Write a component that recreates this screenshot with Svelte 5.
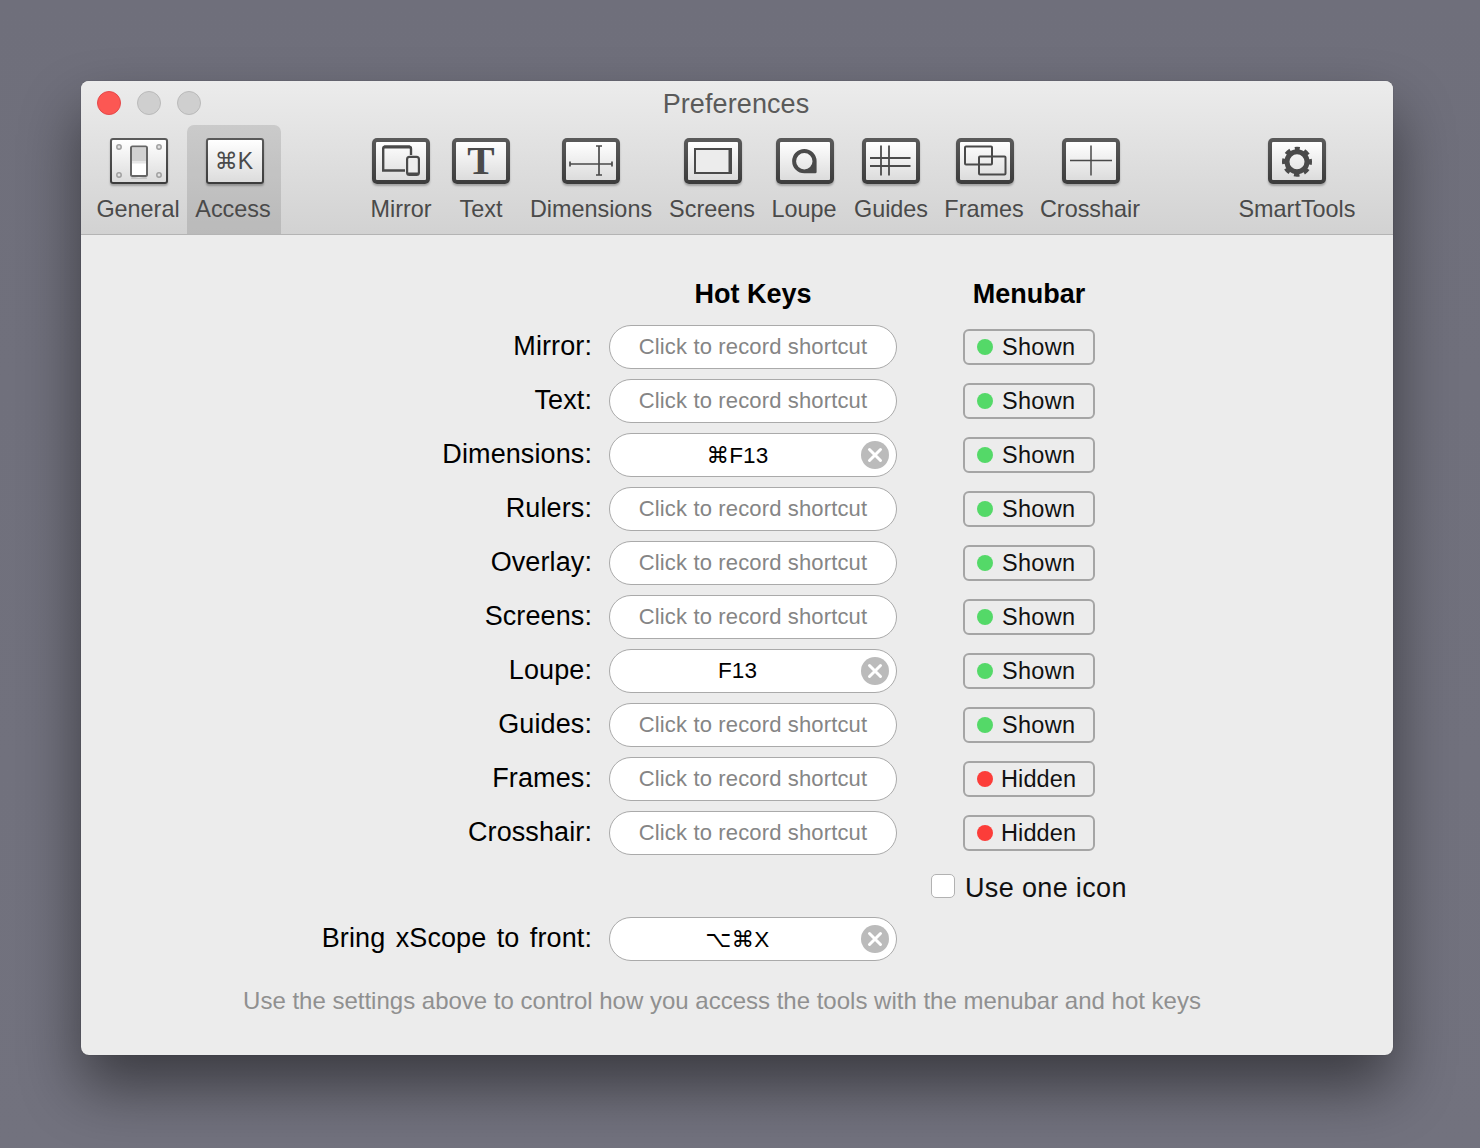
<script>
  const tools = [
    { id: 'mirror', label: 'Mirror' },
    { id: 'text', label: 'Text' },
    { id: 'dimensions', label: 'Dimensions' },
    { id: 'screens', label: 'Screens', nudge: true },
    { id: 'loupe', label: 'Loupe', nudge: true },
    { id: 'guides', label: 'Guides' },
    { id: 'frames', label: 'Frames', nudge: true },
    { id: 'crosshair', label: 'Crosshair', nudge: true }
  ];

  const rows = [
    { name: 'Mirror', key: '', shown: true },
    { name: 'Text', key: '', shown: true },
    { name: 'Dimensions', key: '⌘F13', shown: true },
    { name: 'Rulers', key: '', shown: true },
    { name: 'Overlay', key: '', shown: true },
    { name: 'Screens', key: '', shown: true },
    { name: 'Loupe', key: 'F13', shown: true },
    { name: 'Guides', key: '', shown: true },
    { name: 'Frames', key: '', shown: false },
    { name: 'Crosshair', key: '', shown: false }
  ];
</script>

{#snippet shortcut(key)}
  <div class="pill" class:set={key}>
    {#if key}
      <span class="keys">{key}</span>
      <svg class="clear" width="28" height="28" viewBox="0 0 28 28">
        <circle cx="14" cy="14" r="14" fill="#bbb" />
        <path d="M8.500 8.500l11 11M19.500 8.500l-11 11" stroke="#fff" stroke-width="3" stroke-linecap="round" />
      </svg>
    {:else}
      Click to record shortcut
    {/if}
  </div>
{/snippet}

{#snippet glyph(id)}
  <svg width="58" height="46" viewBox="0 0 58 46" fill="none" stroke="#4a4a4a">
    {#if id === 'mirror'}
      <path d="M33 32.500H11.200V10.500q0-1.800 1.800-1.800H37q2 0 2 2V17" stroke-width="2.400" />
      <path d="M12 9H38" stroke-width="2.800" />
      <rect x="35.100" y="18.800" width="11.800" height="18.200" rx="2.400" fill="#eee" stroke-width="2.200" />
      <path d="M36 35.500h10" stroke-width="2" />
    {:else if id === 'text'}
      <text x="29" y="36" text-anchor="middle" class="serif" fill="#4a4a4a" stroke="none">T</text>
    {:else if id === 'dimensions'}
      <path d="M8 26H50M8 23.500V28.500M50 23.500V28.500M37 8V37M34 8H40M34 37H40" stroke-width="1.700" />
    {:else if id === 'screens'}
      <rect x="11" y="11" width="36" height="24" fill="#ececec" stroke-width="2" />
      <path d="M46 10V36" stroke-width="3" />
    {:else if id === 'loupe'}
      <path
        fill="#4a4a4a"
        stroke="none"
        fill-rule="evenodd"
        d="M28.300 11a12.300 12.300 0 0 1 12.300 12.300V34q0 1.300-1.300 1.300H28.300a12.150 12.150 0 0 1 0-24.300zM28.300 15.100a8.200 8.200 0 1 0 0 16.400 8.200 8.200 0 0 0 0-16.400z"
      />
    {:else if id === 'guides'}
      <path d="M19 7.500V37.500M27 7.500V37.500M8 20H48.500M8 28H48.500" stroke-width="1.800" />
    {:else if id === 'frames'}
      <rect x="9" y="8.500" width="27" height="18" rx="1" stroke-width="2" />
      <rect x="23" y="18.500" width="26.500" height="18" rx="1" stroke-width="2" />
    {:else if id === 'crosshair'}
      <path d="M8 22.500H50M29 7.500V37.500" stroke-width="1.500" />
    {:else if id === 'gear'}
      <circle cx="29" cy="23.700" r="10" stroke-width="5" />
      <circle cx="29" cy="23.700" r="13.300" stroke-width="3.400" stroke-dasharray="5.600 4.850" stroke-dashoffset="2.800" transform="rotate(-90 29 23.700)" />
    {/if}
  </svg>
{/snippet}

<div class="window">
  <header class="chrome">
    <div class="titlebar">
      <div class="lights">
        <span class="light close"></span>
        <span class="light"></span>
        <span class="light"></span>
      </div>
      <div class="title">Preferences</div>
    </div>

    <nav class="toolbar">
      <div class="tool">
        <div class="icon thin nudged">
          <svg width="58" height="46" viewBox="0 0 58 46" fill="none">
            <g fill="#e2e2e2" stroke="#a0a0a0" stroke-width="1.500">
              <circle cx="9" cy="9" r="2.200" />
              <circle cx="49" cy="9" r="2.200" />
              <circle cx="9" cy="37" r="2.200" />
              <circle cx="49" cy="37" r="2.200" />
            </g>
            <path d="M22 37q7 6 14 0l1 4H21z" fill="#000" opacity=".12" />
            <rect x="21" y="8.500" width="16" height="29.500" rx="1.500" fill="#fff" stroke="#666" stroke-width="2" />
            <rect x="22" y="9.500" width="14" height="14" fill="#d2d2d2" />
            <rect x="22" y="23.500" width="14" height="2" fill="#e6e6e6" />
          </svg>
        </div>
        <span class="label">General</span>
      </div>

      <div class="tool active">
        <div class="icon thin nudged"><span class="cmdk">⌘K</span></div>
        <span class="label access">Access</span>
      </div>

      <div class="spacer"></div>

      {#each tools as tool}
        <div class="tool">
          <div class="icon" class:nudged={tool.nudge}>{@render glyph(tool.id)}</div>
          <span class="label">{tool.label}</span>
        </div>
      {/each}

      <div class="spacer"></div>

      <div class="tool">
        <div class="icon">{@render glyph('gear')}</div>
        <span class="label">SmartTools</span>
      </div>
    </nav>
  </header>

  <main class="content">
    <div class="grid">
      <div></div>
      <h2>Hot Keys</h2>
      <h2 class="menu-head">Menubar</h2>

      {#each rows as row}
        <div class="name">{row.name}:</div>
        {@render shortcut(row.key)}
        <div class="status" class:hidden={!row.shown}>
          <span class="dot"></span>
          <span class="state">{row.shown ? 'Shown' : 'Hidden'}</span>
        </div>
      {/each}

      <div></div>
      <div></div>
      <label class="one-icon">
        <span class="check"></span>
        <span class="one-text">Use one icon</span>
      </label>

      <div class="name">Bring xScope to front:</div>
      {@render shortcut('⌥⌘X')}
      <div></div>
    </div>

    <p class="hint">Use the settings above to control how you access the tools with the menubar and hot keys</p>
  </main>
</div>

<style>
  :global(body) {
    margin: 0;
    background: linear-gradient(#6f6f7b, #72727e);
    font-family: "Liberation Sans", "DejaVu Sans", sans-serif;
  }

  .window {
    width: 1312px;
    height: 974px;
    margin: 81px 87px 93px 81px;
    border-radius: 8px;
    overflow: hidden;
    box-shadow: 0 0 1px rgba(0, 0, 0, 0.4), 0 32px 60px rgba(0, 0, 0, 0.48);
    background: #ececec;
    display: flex;
    flex-direction: column;
  }

  .chrome {
    height: 154px;
    box-sizing: border-box;
    background: linear-gradient(#ececec, #d2d2d2);
    border-bottom: 1px solid #b4b4b4;
  }

  .titlebar {
    height: 44px;
    display: grid;
    grid-template-columns: 1fr auto 1fr;
    align-items: center;
  }

  .lights {
    display: flex;
    gap: 16px;
    padding: 0 0 0 16px;
  }

  .light {
    width: 24px;
    height: 24px;
    box-sizing: border-box;
    border-radius: 50%;
    background: #cfcfcf;
    border: 1px solid #bababa;
  }

  .light.close {
    background: #fc5753;
    border-color: #e5484a;
  }

  .title {
    font-size: 27px;
    letter-spacing: 0.1px;
    color: #5a5a5a;
    grid-column: 2;
    padding-top: 3px;
    margin-left: -2px;
  }

  .toolbar {
    height: 109px;
    padding-left: 8px;
    display: grid;
    grid-template-columns: 98px 94px 82px 76px 84px 136px 106px 78px 96px 90px 122px 86px 120px;
  }

  .tool {
    display: flex;
    flex-direction: column;
    align-items: center;
    padding-top: 13px;
    min-width: 0;
  }

  .tool.active {
    background: rgba(0, 0, 0, 0.115);
    border-radius: 7px 7px 0 0;
  }

  .icon {
    width: 58px;
    height: 46px;
    flex: none;
    box-sizing: border-box;
    border: 4px solid transparent;
    border-radius: 5px;
    background: linear-gradient(#fff, #dcdcdc) padding-box, linear-gradient(#5a5a5a, #3c3c3c) border-box;
    box-shadow: 0 2px 2px rgba(0, 0, 0, 0.25);
    display: flex;
    align-items: center;
    justify-content: center;
  }

  .icon svg {
    flex: none;
  }

  .icon.thin {
    border-width: 2px;
    border-radius: 3px;
  }

  .icon.nudged {
    margin-left: 2px;
  }

  .cmdk {
    font-size: 23px;
    color: #4a4a4a;
    margin-right: 2px;
  }

  .serif {
    font-family: "Liberation Serif", serif;
    font-weight: 700;
    font-size: 41px;
  }

  .label {
    margin-top: 11px;
    font-size: 23.400px;
    line-height: 28px;
    color: #4a4a4a;
    white-space: nowrap;
  }

  .label.access {
    margin-right: 2px;
  }

  .content {
    flex: 1;
    padding-top: 40px;
  }

  .grid {
    display: grid;
    grid-template-columns: 511px 288px 132px;
    column-gap: 17px;
    row-gap: 10px;
    align-items: center;
  }

  .grid > :nth-child(3n) {
    margin-left: 49px;
  }

  h2 {
    margin: 0 0 3px;
    padding-top: 1px;
    font-size: 27px;
    line-height: 36px;
    font-weight: 700;
    color: #000;
    text-align: center;
  }

  .menu-head {
    width: 132px;
  }

  .name {
    font-size: 27px;
    letter-spacing: 0.1px;
    word-spacing: 2.800px;
    line-height: 30px;
    color: #000;
    text-align: right;
    padding-bottom: 2px;
  }

  .pill {
    height: 44px;
    box-sizing: border-box;
    border: 1px solid #aaa;
    border-radius: 22px;
    background: #fff;
    display: flex;
    align-items: center;
    justify-content: center;
    font-size: 22px;
    letter-spacing: 0.15px;
    color: #858585;
  }

  .pill.set {
    justify-content: space-between;
    padding: 0 7px 0 0;
    color: #000;
  }

  .keys {
    width: 258px;
    margin-left: 4px;
    text-align: center;
    font-size: 22.500px;
  }

  .clear {
    flex: none;
  }

  .status {
    width: 132px;
    height: 36px;
    box-sizing: border-box;
    border: 2px solid #a5a5a5;
    border-radius: 6px;
    display: flex;
    align-items: center;
    gap: 9px;
    padding-left: 12px;
    font-size: 23.500px;
    letter-spacing: 0.3px;
    color: #111;
  }

  .status.hidden {
    gap: 8px;
    letter-spacing: 0.1px;
  }

  .state {
    padding-top: 1px;
  }

  .dot {
    width: 16px;
    height: 16px;
    border-radius: 50%;
    background: #54d968;
    flex: none;
  }

  .hidden .dot {
    background: #fc3d39;
  }

  .one-icon {
    height: 42px;
    display: flex;
    align-items: center;
    gap: 10px;
    font-size: 27px;
    letter-spacing: 0.35px;
    color: #111;
    white-space: nowrap;
  }

  .grid > .one-icon {
    margin-left: 17px;
  }

  .check {
    width: 24px;
    height: 24px;
    box-sizing: border-box;
    border: 1px solid #b2b2b2;
    border-radius: 5px;
    background: #fff;
    flex: none;
  }

  .one-text {
    margin-top: 4px;
  }

  .hint {
    margin: 26px 0 0;
    font-size: 24px;
    line-height: 28px;
    color: #909090;
    text-align: center;
    padding-right: 30px;
  }
</style>
